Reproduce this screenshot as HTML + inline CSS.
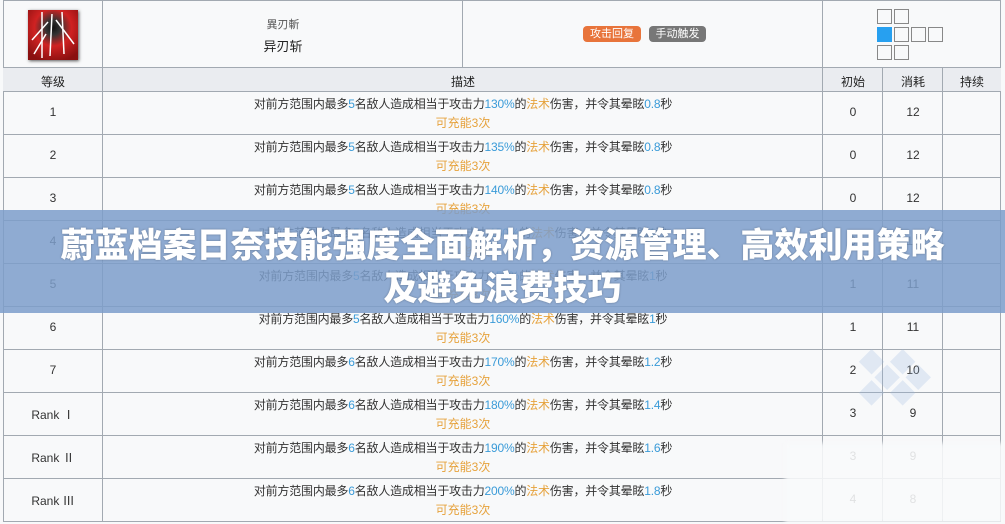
<!DOCTYPE html>
<html><head><meta charset="utf-8"><style>
body{margin:0;width:1005px;height:524px;overflow:hidden;background:#f8f9fa;font-family:"Liberation Sans","Noto Sans CJK SC",sans-serif;color:#222;position:relative}
.c{position:absolute;box-sizing:border-box}
.l{position:absolute;background:#a2a9b1}
.t{position:absolute;font-size:12px;text-align:center;white-space:nowrap}
.d{color:#333;letter-spacing:-0.2px}
.b{color:#3a9bd8}.o{color:#e6a23c}
</style></head><body>
<div class="c" style="left:3px;top:0;width:998px;height:522px;background:#f8f9fa;border:1px solid #a2a9b1"></div>
<div class="c" style="left:3px;top:67px;width:998px;height:24px;background:#eaecf0"></div>
<div class="l" style="left:3px;top:67px;width:998px;height:1px"></div>
<div class="l" style="left:3px;top:91px;width:998px;height:1px"></div>
<div id="rows"></div>
<div class="l" style="left:102px;top:0;width:1px;height:522px"></div>
<div class="l" style="left:462px;top:0;width:1px;height:67px"></div>
<div class="l" style="left:822px;top:0;width:1px;height:522px"></div>
<div class="l" style="left:882px;top:67px;width:1px;height:455px"></div>
<div class="l" style="left:942px;top:67px;width:1px;height:455px"></div>
<div class="c" style="left:28px;top:10px;width:50px;height:50px;background:radial-gradient(circle at 50% 35%,#111 0,#333 18%,#d02222 45%,#8a1010 85%);box-shadow:1px 1px 3px #555;overflow:hidden">
<svg width="50" height="50"><g stroke="#fff" stroke-width="1.5"><line x1="14" y1="2" x2="14" y2="48"/><line x1="24" y1="4" x2="22" y2="46"/><line x1="34" y1="2" x2="36" y2="44"/><line x1="4" y1="30" x2="20" y2="12"/><line x1="46" y1="34" x2="28" y2="10"/><line x1="6" y1="44" x2="18" y2="24"/></g></svg></div>
<div class="t" style="left:103px;width:360px;top:16px;font-size:11px;color:#555">異刃斬</div>
<div class="t" style="left:103px;width:360px;top:36px;font-size:13px">异刃斩</div>
<div class="c" style="left:583px;top:26px;width:58px;height:16px;background:#e8743b;border-radius:4px;color:#fff;font-size:11px;text-align:center;line-height:16px">攻击回复</div>
<div class="c" style="left:649px;top:26px;width:57px;height:16px;background:#777;border-radius:4px;color:#fff;font-size:11px;text-align:center;line-height:16px">手动触发</div>
<svg class="c" style="left:876px;top:8px" width="72" height="52"><g fill="none" stroke="#888" stroke-width="1"><rect x="1.5" y="1.5" width="14" height="14"/><rect x="18.5" y="1.5" width="14" height="14"/><rect x="18.5" y="19.5" width="14" height="14"/><rect x="35.5" y="19.5" width="14" height="14"/><rect x="52.5" y="19.5" width="14" height="14"/><rect x="1.5" y="37.5" width="14" height="14"/><rect x="18.5" y="37.5" width="14" height="14"/></g><rect x="1" y="19" width="15" height="15" fill="#27a0f0"/></svg>
<div class="t" style="left:3px;width:100px;top:73px;font-size:12px">等级</div>
<div class="t" style="left:103px;width:720px;top:73px;font-size:12px">描述</div>
<div class="t" style="left:823px;width:60px;top:73px;font-size:12px">初始</div>
<div class="t" style="left:883px;width:60px;top:73px;font-size:12px">消耗</div>
<div class="t" style="left:943px;width:58px;top:73px;font-size:12px">持续</div>
<script>
var d=[["1",5,"130%","0.8",0,12],["2",5,"135%","0.8",0,12],["3",5,"140%","0.8",0,12],["4",5,"150%","1",0,12],["5",5,"155%","1",1,11],["6",5,"160%","1",1,11],["7",6,"170%","1.2",2,10],["Rank Ⅰ",6,"180%","1.4",3,9],["Rank Ⅱ",6,"190%","1.6",3,9],["Rank Ⅲ",6,"200%","1.8",4,8]];
var h="";
d.forEach(function(r,i){var y=91+i*43;
if(i>0)h+='<div class="l" style="left:3px;top:'+y+'px;width:998px;height:1px"></div>';
h+='<div class="t" style="left:3px;width:100px;top:'+(y+14)+'px;font-size:12px;color:#333">'+r[0]+'</div>';
h+='<div class="t d" style="left:103px;width:720px;top:'+(y+4)+'px">对前方范围内最多<span class="b">'+r[1]+'</span>名敌人造成相当于攻击力<span class="b">'+r[2]+'</span>的<span class="o">法术</span>伤害，并令其晕眩<span class="b">'+r[3]+'</span>秒</div>';
h+='<div class="t o" style="left:103px;width:720px;top:'+(y+23)+'px">可充能3次</div>';
h+='<div class="t" style="left:823px;width:60px;top:'+(y+14)+'px;font-size:12px;color:#333">'+r[4]+'</div>';
h+='<div class="t" style="left:883px;width:60px;top:'+(y+14)+'px;font-size:12px;color:#333">'+r[5]+'</div>';});
document.getElementById("rows").innerHTML=h;
</script>
<svg class="c" style="left:830px;top:340px;opacity:.25" width="110" height="110"><g fill="#9ab8e0" transform="rotate(45 55 55)"><rect x="35" y="10" width="18" height="18"/><rect x="57" y="10" width="18" height="18"/><rect x="35" y="32" width="18" height="18"/><rect x="57" y="32" width="18" height="18"/><rect x="35" y="54" width="18" height="18"/><rect x="13" y="32" width="18" height="18"/></g></svg>
<div class="c" style="left:785px;top:443px;width:220px;height:81px;background:rgba(248,249,250,.88);filter:blur(2px)"></div>
<div class="c" style="left:0;top:210px;width:1005px;height:103px;background:rgba(125,158,202,.85)"></div>
<div class="t" style="left:0;width:1005px;top:221px;font-family:'Noto Sans CJK SC',sans-serif;font-size:34px;font-weight:900;color:#fff;line-height:43px;text-shadow:0 0 2px rgba(0,0,0,.3)">蔚蓝档案日奈技能强度全面解析，资源管理、高效利用策略<br>及避免浪费技巧</div>
</body></html>
